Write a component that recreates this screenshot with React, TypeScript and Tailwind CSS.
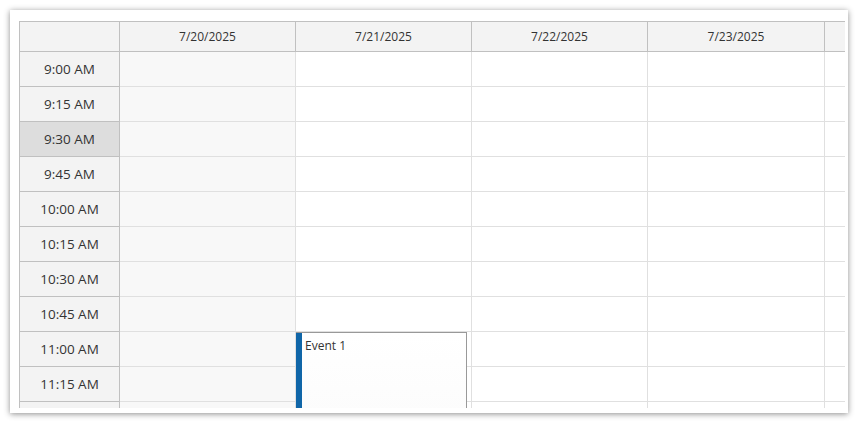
import { FC } from 'react';

const times = [
  '9:00 AM',
  '9:15 AM',
  '9:30 AM',
  '9:45 AM',
  '10:00 AM',
  '10:15 AM',
  '10:30 AM',
  '10:45 AM',
  '11:00 AM',
  '11:15 AM',
  '',
];

type Day = { label: string; width: string; weekend?: boolean };

const days: Day[] = [
  { label: '7/20/2025', width: 'w-[176px]', weekend: true },
  { label: '7/21/2025', width: 'w-[176px]' },
  { label: '7/22/2025', width: 'w-[176px]' },
  { label: '7/23/2025', width: 'w-[177px]' },
];

const DayColumn: FC<{ day: Day; children?: React.ReactNode }> = ({ day, children }) => (
  <div
    className={`${day.width} shrink-0 relative border-r border-[#e0e0e0] ${
      day.weekend ? 'bg-[#f8f8f8]' : 'bg-white'
    }`}
  >
    {times.map((t, i) => (
      <div key={i} className="h-[35px] border-b border-[#e0e0e0]" />
    ))}
    {children}
  </div>
);

export default function App() {
  return (
    <div
      className="w-[860px] h-[423px] bg-white p-[10px] text-[#333]"
      style={{ fontFamily: '"Open Sans", "Noto Sans", sans-serif' }}
    >
      <div className="w-[838px] h-[403px] bg-white shadow-[0_1px_6px_rgba(0,0,0,0.45)] pl-[9px] pt-[11px] overflow-hidden">
        <div className="w-[826px] h-[387px] overflow-hidden border-l border-t border-[#c0c0c0] flex flex-col">
          {/* header */}
          <div className="flex h-[30px] shrink-0 bg-[#f3f3f3] border-b border-[#c0c0c0]">
            <div className="w-[100px] shrink-0 border-r border-[#c0c0c0]" />
            {days.map((d) => (
              <div
                key={d.label}
                className={`${d.width} shrink-0 border-r border-[#c0c0c0] flex items-center justify-center text-[12px]`}
              >
                {d.label}
              </div>
            ))}
            <div className="flex-1" />
          </div>

          {/* body */}
          <div className="flex flex-1 overflow-hidden">
            <div className="w-[100px] shrink-0 bg-[#f3f3f3] border-r border-[#c0c0c0]">
              {times.map((t, i) => (
                <div
                  key={i}
                  className={`h-[35px] border-b border-[#c0c0c0] flex items-center justify-center pt-[1px] text-[13.5px] ${
                    t === '9:30 AM' ? 'bg-[#dddddd]' : ''
                  }`}
                >
                  {t}
                </div>
              ))}
            </div>

            <DayColumn day={days[0]} />
            <DayColumn day={days[1]}>
              <div className="absolute left-0 top-[280px] w-[171px] h-[140px] flex border-t border-r border-[#999] bg-gradient-to-b from-white to-[#fafafa]">
                <div className="w-[6px] shrink-0 bg-[#1066a8]" />
                <div className="pl-[3px] pt-[5px] text-[12px] leading-[16px]">Event 1</div>
              </div>
            </DayColumn>
            <DayColumn day={days[2]} />
            <DayColumn day={days[3]} />

            <div className="flex-1 bg-white">
              {times.map((t, i) => (
                <div key={i} className="h-[35px] border-b border-[#e0e0e0]" />
              ))}
            </div>
          </div>
        </div>
      </div>
    </div>
  );
}
